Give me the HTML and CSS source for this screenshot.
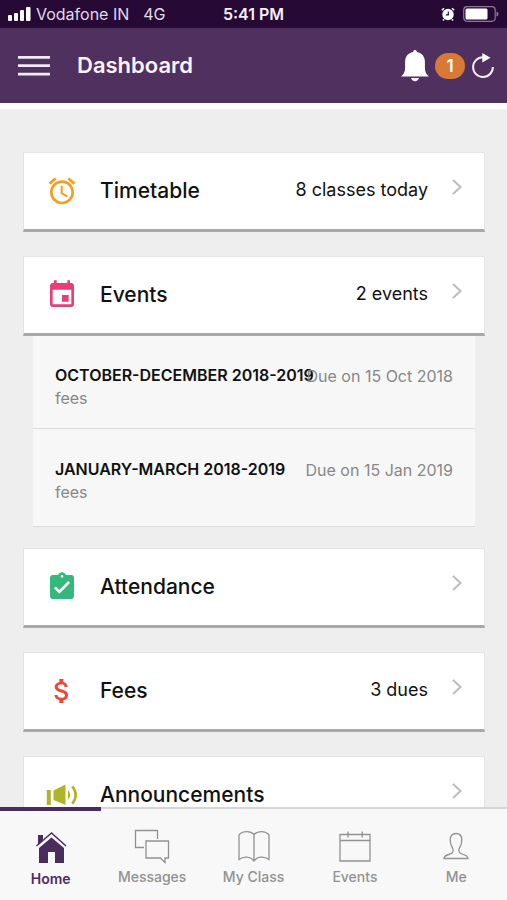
FILE: index.html
```html
<!DOCTYPE html>
<html lang="en">
<head>
<meta charset="utf-8">
<meta name="viewport" content="width=device-width, initial-scale=1">
<title>Dashboard</title>
<link rel="stylesheet" href="styles.css">
</head>
<body>
<div class="status">
  <div class="status-side">
    <svg class="signal" width="23" height="14" viewBox="0 0 23 14" fill="#fff" aria-hidden="true"><rect x="0" y="8" width="4" height="6" rx="1"/><rect x="6" y="6" width="4" height="8" rx="1"/><rect x="12" y="3" width="4" height="11" rx="1"/><rect x="18" y="0" width="4.500" height="14" rx="1"/></svg>
    <span class="carrier">Vodafone IN</span>
    <span>4G</span>
  </div>
  <span class="time">5:41 PM</span>
  <div class="status-side status-end">
    <svg width="14" height="14" viewBox="0 0 14 14" aria-hidden="true"><circle cx="7" cy="7.500" r="5.700" fill="#fff"/><path d="M.8 3.200 3 1.200M13.200 3.200 11 1.200M3 12.200l-1 1.300M11 12.200l1 1.300" stroke="#fff" stroke-width="1.500"/><path d="M7.300 4.500v3.300H4.800" fill="none" stroke="#260a35" stroke-width="1.200"/></svg>
    <svg width="36" height="16" viewBox="0 0 36 16" aria-hidden="true"><rect x=".7" y=".7" width="31.500" height="14.600" rx="3.500" fill="none" stroke="#8b7a95" stroke-width="1.200"/><rect x="2.500" y="2.500" width="22" height="11" rx="1.500" fill="#fff"/><path d="M33.500 5.500q2 .5 2 2.500t-2 2.500z" fill="#8b7a95"/></svg>
  </div>
</div>
<header class="topbar">
  <button class="icon-btn" aria-label="Menu"><svg width="32" height="20" viewBox="0 0 32 20" fill="#f3e9f7"><path d="M0 0h32v2.700H0zM0 8.300h32V11H0zM0 16.700h32v2.700H0z"/></svg></button>
  <h1>Dashboard</h1>
  <div class="actions">
    <button class="icon-btn" aria-label="Notifications"><svg width="28" height="32" viewBox="0 0 28 32" fill="#fff"><path d="M14 0c1.200 0 1.800.8 1.900 1.900 5.100 1 8 4.600 8 9.600v6.300c0 4 1.300 6.700 4.100 8.700H0c2.800-2 4.100-4.700 4.100-8.700v-6.300c0-5 2.900-8.600 8-9.600C12.200.8 12.800 0 14 0zM10 28h8c-.6 2-2 3.200-4 3.200S10.600 30 10 28z"/></svg></button>
    <span class="badge">1</span>
    <button class="icon-btn" aria-label="Refresh"><svg width="24" height="26" viewBox="0 0 24 26"><path d="M12 4.200A9.900 9.900 0 1 0 21.900 14" fill="none" stroke="#f4eef6" stroke-width="2"/><path d="M11.300 0 19.500 4.700 11.300 9.400z" fill="#fff"/></svg></button>
  </div>
</header>
<main class="content">
  <a class="card" href="#timetable">
    <svg class="card-icon" viewBox="0 0 24 24" fill="#f79c1b"><path d="M22 5.720l-4.600-3.860-1.290 1.530 4.600 3.860L22 5.720zM7.880 3.390L6.600 1.860 2 5.710l1.290 1.530 4.590-3.850zM12.500 8H11v6l4.750 2.850.75-1.230-4-2.370V8zM12 4c-4.970 0-9 4.030-9 9s4.020 9 9 9c4.970 0 9-4.030 9-9s-4.030-9-9-9zm0 16c-3.870 0-7-3.130-7-7s3.130-7 7-7 7 3.130 7 7-3.130 7-7 7z"/></svg>
    <span class="card-title">Timetable</span><span class="card-note">8 classes today</span>
    <svg class="chevron" viewBox="0 0 10 16"><path d="M1 1l7.500 7L1 15"/></svg>
  </a>
  <section class="group">
    <a class="card" href="#events">
      <svg class="card-icon" viewBox="0 0 24 24" fill="#e83e78"><path d="M17 12h-5v5h5v-5zM16 1v2H8V1H6v2H5c-1.110 0-1.990.9-1.990 2L3 19c0 1.100.89 2 2 2h14c1.100 0 2-.9 2-2V5c0-1.100-.9-2-2-2h-1V1h-2zm3 18H5V8h14v11z"/></svg>
      <span class="card-title">Events</span><span class="card-note">2 events</span>
      <svg class="chevron" viewBox="0 0 10 16"><path d="M1 1l7.500 7L1 15"/></svg>
    </a>
    <ul class="dues">
      <li><div class="due-name"><strong>OCTOBER-DECEMBER 2018-2019</strong><span>fees</span></div><span class="due-date">Due on 15 Oct 2018</span></li>
      <li><div class="due-name"><strong>JANUARY-MARCH 2018-2019</strong><span>fees</span></div><span class="due-date">Due on 15 Jan 2019</span></li>
    </ul>
  </section>
  <a class="card" href="#attendance">
    <svg class="card-icon" viewBox="0 0 24 24" fill="#34b87c"><path d="M19 3h-4.180C14.400 1.840 13.300 1 12 1c-1.300 0-2.400.84-2.820 2H5c-1.100 0-2 .9-2 2v14c0 1.100.9 2 2 2h14c1.100 0 2-.9 2-2V5c0-1.100-.9-2-2-2zm-7 0c.55 0 1 .45 1 1s-.45 1-1 1-1-.45-1-1 .45-1 1-1zm-2 14l-4-4 1.410-1.410L10 14.170l6.590-6.590L18 9l-8 8z"/></svg>
    <span class="card-title">Attendance</span>
    <svg class="chevron" viewBox="0 0 10 16"><path d="M1 1l7.500 7L1 15"/></svg>
  </a>
  <a class="card" href="#fees">
    <svg class="card-icon" viewBox="0 0 24 24" fill="#f04438"><path d="M11.800 10.900c-2.270-.59-3-1.200-3-2.150 0-1.090 1.010-1.850 2.700-1.850 1.780 0 2.440.85 2.500 2.100h2.210c-.07-1.720-1.120-3.300-3.210-3.810V3h-3v2.160c-1.940.42-3.500 1.680-3.500 3.610 0 2.310 1.910 3.460 4.700 4.130 2.500.6 3 1.480 3 2.410 0 .69-.49 1.790-2.700 1.790-2.060 0-2.870-.92-2.980-2.100h-2.200c.12 2.190 1.760 3.420 3.680 3.830V21h3v-2.150c1.950-.37 3.500-1.500 3.500-3.550 0-2.840-2.430-3.810-4.700-4.400z"/></svg>
    <span class="card-title">Fees</span><span class="card-note">3 dues</span>
    <svg class="chevron" viewBox="0 0 10 16"><path d="M1 1l7.500 7L1 15"/></svg>
  </a>
  <a class="card" href="#announcements">
    <svg class="card-icon" viewBox="0 0 32 32" fill="#aeb52a"><path d="M.8 11h4v15h-4zM7.500 11.500 19.500 5.500V26L7.500 21z"/><path d="M22 11q4.500 4.700 0 10z"/><path d="M26.200 7.300q7 8.500 0 17.500" fill="none" stroke="#aeb52a" stroke-width="2.600"/></svg>
    <span class="card-title">Announcements</span>
    <svg class="chevron" viewBox="0 0 10 16"><path d="M1 1l7.500 7L1 15"/></svg>
  </a>
</main>
<nav class="tabs">
  <a class="tab active" href="#home"><svg viewBox="0 0 36 36" fill="#4b2c5e"><path d="M5 5h5v5l-5 5zM6 18 18.500 7.500 31 18v15H22V22h-7v11H6z"/><path d="M3.500 16 18.500 3 33 16" fill="none" stroke="#4b2c5e" stroke-width="1.500"/></svg>Home</a>
  <a class="tab" href="#messages"><svg viewBox="0 0 36 36"><path d="M10 19.500H1.500V2.500h22V11M12 13h22.500v17H31v4.500L26.500 30H12z"/></svg>Messages</a>
  <a class="tab" href="#class"><svg viewBox="0 0 36 36"><path d="M18 6.500v27M18 6.500C14.500 2.500 6.500 2.500 3 7v24.500c4.500-3.500 11.500-3.500 15 1.500 3.500-5 10.500-5 15-1.500V7C29.500 2.500 21.500 2.500 18 6.500z"/></svg>My Class</a>
  <a class="tab" href="#calendar"><svg viewBox="0 0 36 36"><path d="M3 6.500h30V33H3zM3 12.500h30M11 3.500v6M25.200 3.500v6"/></svg>Events</a>
  <a class="tab" href="#me"><svg viewBox="0 0 36 36"><path d="M18 5.500c-4 0-5.800 2.500-5.800 6.300 0 5 1.200 6.200 2.500 8.500 1.500 3-.2 5.200-4 6.200-3.500 1-4.700 1.700-4.700 4h24c0-2.300-1.200-3-4.700-4-3.800-1-5.500-3.200-4-6.200 1.300-2.300 2.500-3.500 2.500-8.500 0-3.800-1.800-6.300-5.800-6.300z"/></svg>Me</a>
</nav>
</body>
</html>
```
FILE: styles.css
```css
* { box-sizing: border-box; }
body {
  margin: 0;
  height: 100vh;
  display: flex;
  flex-direction: column;
  background: #eee;
  color: #111;
  font-family: Inter, "Liberation Sans", sans-serif;
}
a { color: inherit; text-decoration: none; }
svg { display: block; flex: none; }

.status {
  display: grid;
  grid-template-columns: 1fr auto 1fr;
  align-items: center;
  height: 28px;
  flex: none;
  padding: 0 8px;
  background: #260a35;
  color: #e2d9e8;
  font-size: 16px;
}
.status-side { display: flex; align-items: center; white-space: nowrap; }
.carrier { margin: 0 14px 0 5px; }
.status-end { justify-content: flex-end; gap: 8px; }
.time { color: #f5eff8; font-weight: 600; }

.topbar {
  display: flex;
  align-items: center;
  height: 81px;
  flex: none;
  padding: 0 12px 0 18px;
  background: #50305f;
  border-bottom: 6px solid #fff;
}
.icon-btn { padding: 0; border: 0; background: none; }
.topbar h1 {
  flex: 1;
  margin: 0 0 0 27px;
  padding-bottom: 2px;
  color: #fbf3fd;
  font-size: 22px;
  font-weight: 600;
}
.actions { display: flex; align-items: center; gap: 6px; }
.badge {
  width: 30px;
  border-radius: 13px;
  background: #d87935;
  color: #fff;
  font-size: 17px;
  font-weight: 600;
  line-height: 26px;
  text-align: center;
}

.content {
  display: flex;
  flex: 1;
  flex-direction: column;
  gap: 21px;
  min-height: 0;
  padding: 43px 22px 24px 23px;
  overflow-y: auto;
  scrollbar-width: none;
}
.card {
  display: flex;
  align-items: center;
  height: 80px;
  flex: none;
  margin-bottom: 3px;
  padding: 0 22px;
  background: #fff;
  border: 1px solid #e4e4e4;
  border-bottom: 3px solid #a8a8a8;
}
.group .card { margin-bottom: 0; }
.card-icon { width: 32px; height: 32px; }
.card-title {
  flex: 1;
  margin-left: 22px;
  padding-bottom: 2px;
  font-size: 21px;
  font-weight: 500;
}
.card-note { margin-right: 24px; padding-bottom: 4px; font-size: 18px; }
.chevron {
  width: 10px;
  height: 16px;
  margin-bottom: 8px;
  fill: none;
  stroke: #bcbcbc;
  stroke-width: 2;
}

.dues { margin: 0 10px; padding: 0; list-style: none; }
.dues li {
  display: flex;
  align-items: flex-start;
  padding: 28px 22px 18px;
  background: #f7f7f7;
  border-bottom: 1px solid #dcdcdc;
  font-size: 16px;
  line-height: 23px;
  white-space: nowrap;
}
.dues li + li { padding-top: 29px; padding-bottom: 22px; }
.due-name { display: grid; flex: 1; min-width: 0; color: #888; }
.due-name strong { color: #111; font-weight: 600; }
.due-date { padding-top: 1px; color: #888; }

.tabs {
  display: flex;
  height: 93px;
  flex: none;
  background: #f8f8f8;
}
.tab {
  display: flex;
  flex: 1;
  flex-direction: column;
  align-items: center;
  gap: 4px;
  padding-top: 19px;
  border-top: 2px solid #d6d6d6;
  color: #929292;
  font-size: 14px;
  font-weight: 500;
  line-height: 18px;
}
.tab svg { width: 36px; height: 36px; }
.tab:not(.active) svg { fill: none; stroke: #929292; stroke-width: 1.3; }
.tab.active { border-top: 4px solid #4b2c5e; color: #4b2c5e; font-weight: 600; }
```
